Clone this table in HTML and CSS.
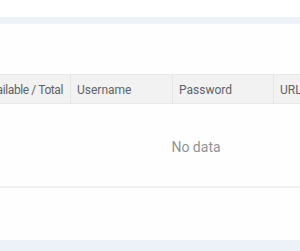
FILE: index.html
```html
<!DOCTYPE html>
<html>
<head>
<meta charset="utf-8">
<link rel="stylesheet" href="styles.css">
</head>
<body>
<div class="top"></div>
<div class="gap"></div>
<div class="card">
  <div class="table">
    <div class="thead">
      <div class="th c0"><span>Available / Total</span></div>
      <div class="th c1">Username</div>
      <div class="th c2">Password</div>
      <div class="th c3">URL</div>
    </div>
    <div class="tbody">
      <div class="empty">No data</div>
    </div>
  </div>
</div>
<div class="bottom"></div>
</body>
</html>
```
FILE: styles.css
```css
html, body {
  margin: 0;
  padding: 0;
  background: #edf2f9;
  font-family: Roboto, "Liberation Sans", sans-serif;
}
.top {
  height: 17px;
  background: #ffffff;
}
.gap {
  height: 7px;
}
.card {
  background: #fefefe;
  padding-top: 50px;
  padding-bottom: 52px;
}
.table {
  overflow: hidden;
}
.thead {
  display: flex;
  height: 28px;
  background: #f2f2f2;
  border-top: 1px solid #e8e8e8;
  border-bottom: 1px solid #e8e8e8;
}
.th {
  box-sizing: border-box;
  display: flex;
  align-items: center;
  padding-top: 1px;
  font-size: 12px;
  color: #606266;
  padding-left: 6px;
  padding-right: 7px;
  white-space: nowrap;
  flex: none;
  border-right: 1px solid #e6e6e6;
}
.c0 {
  width: 71px;
  justify-content: flex-end;
  overflow: hidden;
  letter-spacing: -0.4px;
}
.c1 { width: 102px; }
.c2 { width: 101px; }
.c3 { width: 60px; border-right: none; }
.tbody {
  box-sizing: border-box;
  height: 84px;
  padding-top: 4px;
  border-bottom: 2px solid #f0f0f0;
  display: flex;
  align-items: center;
  padding-left: 92px;
  justify-content: center;
}
.empty {
  font-size: 14px;
  color: #909399;
}
.bottom {
  height: 10px;
}
```
